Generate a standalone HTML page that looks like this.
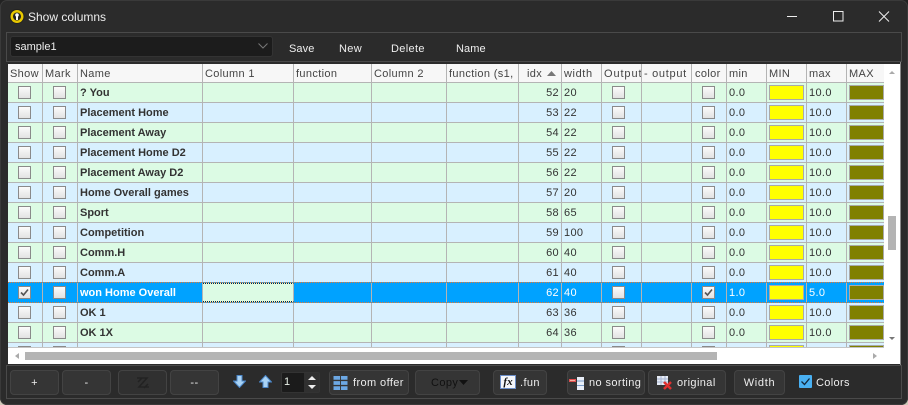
<!DOCTYPE html>
<html><head><meta charset="utf-8"><style>
html,body{margin:0;padding:0;background:linear-gradient(#222 50%,#cfc8b8 50%);}
#w{position:relative;width:908px;height:405px;overflow:hidden;background:#2b2b2b;font:11px "Liberation Sans",sans-serif;color:#eee;border-radius:7px;box-shadow:inset 0 0 0 1px #3a3a3a;}
.a{position:absolute;}
.panel{position:absolute;border:1px solid #4a4a4a;box-sizing:border-box;}
.t{position:absolute;white-space:nowrap;letter-spacing:.35px;}
#grid{position:absolute;left:8px;top:64px;width:892px;height:300px;background:#fff;overflow:hidden;}
#clip{position:absolute;left:0;top:0;width:876px;height:283px;overflow:hidden;}
.r{position:absolute;left:0;width:877px;height:20px;display:grid;grid-template-columns:35px 35px 125px 91px 78px 75px 72px 43px 40px 40px 50px 35px 40px 40px 40px 38px;box-sizing:border-box;border-bottom:1px solid #b4b4b4;color:#333;letter-spacing:.35px;}
.r>span{position:relative;border-right:1px solid #b4b4b4;box-sizing:border-box;line-height:21px;padding-left:2px;white-space:nowrap;overflow:hidden;}
.g{background:#dcfbe4;}
.b{background:#d8f0ff;}
.h{top:0;height:19px;background:#f7f7f7;color:#444;}
.r.h>span{line-height:20px;}
.r>span.n{font-weight:bold;letter-spacing:0;}
.i{text-align:right;padding-right:2px;}
.c:before{content:"";position:absolute;left:10px;top:3px;width:13px;height:13px;box-sizing:border-box;border:1px solid #8a8a8a;background:linear-gradient(#fbfbfb,#e2e2e2);}
.y:before,.o:before{content:"";position:absolute;left:2px;top:2px;width:35px;height:15px;box-sizing:border-box;border:1px solid #aaa;background:#ff0;}
.o:before{background:#808000;}
.r.sel{background:#00a2ff;color:#fff;top:218px;height:21px;border-top:1px dotted #e87830;border-bottom:1px dotted #e87830;}
.btn{position:absolute;top:370px;height:25px;box-sizing:border-box;border:1px solid #434343;border-radius:4px;background:#353535;color:#eee;text-align:center;line-height:25px;letter-spacing:.4px;}
</style></head><body><div id="w">

<svg class="a" style="left:9px;top:9px" width="16" height="15" viewBox="0 0 16 15"><circle cx="8" cy="7.500" r="7.500" fill="#222"/><circle cx="8" cy="7.500" r="6.500" fill="#e8c800"/><circle cx="8" cy="7.500" r="4" fill="#222"/><circle cx="8" cy="6" r="1.800" fill="#fff"/><rect x="7" y="6.500" width="2" height="4.500" fill="#fff"/></svg>
<div class="t" style="left:28px;top:10px;font-size:12px;letter-spacing:0;">Show columns</div>
<svg class="a" style="left:785px;top:9px" width="106" height="16" viewBox="0 0 106 16"><path d="M2 7.500H12" stroke="#eee" fill="none"/><rect x="48.500" y="2.500" width="9.500" height="9.500" stroke="#eee" fill="none"/><path d="M94 2.500L104 12.500M104 2.500L94 12.500" stroke="#eee" fill="none"/></svg>

<div class="panel" style="left:6px;top:32px;width:896px;height:30px;"></div>
<div class="a" style="left:10px;top:36px;width:263px;height:21px;box-sizing:border-box;background:#1c1c1c;border:1px solid #333;border-radius:3px;"></div>
<div class="t" style="left:15px;top:41px;letter-spacing:0;">sample1</div>
<svg class="a" style="left:258px;top:43px" width="10" height="6"><path d="M.5 .5L5 5L9.500 .5" stroke="#777" fill="none"/></svg>
<div class="t" style="left:289px;top:43px;letter-spacing:.1px;">Save</div>
<div class="t" style="left:339px;top:43px;">New</div>
<div class="t" style="left:391px;top:43px;">Delete</div>
<div class="t" style="left:456px;top:43px;letter-spacing:.1px;">Name</div>

<div id="grid">
<div id="clip">
<div class="r h"><span>Show</span><span>Mark</span><span>Name</span><span>Column 1</span><span>function</span><span>Column 2</span><span>function (s1,</span><span style="padding-left:8px">idx<svg class="a" style="left:28px;top:7px" width="9" height="5"><path d="M0 5L4.500 0L9 5Z" fill="#777"/></svg></span><span style="letter-spacing:.6px">width</span><span style="letter-spacing:.9px">Output</span><span style="letter-spacing:.7px">- output</span><span style="padding-left:3px">color</span><span>min</span><span>MIN</span><span>max</span><span>MAX</span></div>

<div class="r g" style="top:19px"><span class="c"></span><span class="c"></span><span class="n">? You</span><span></span><span></span><span></span><span></span><span class="i">52</span><span>20</span><span class="c"></span><span></span><span class="c"></span><span>0.0</span><span class="y"></span><span>10.0</span><span class="o"></span></div>
<div class="r b" style="top:39px"><span class="c"></span><span class="c"></span><span class="n">Placement Home</span><span></span><span></span><span></span><span></span><span class="i">53</span><span>22</span><span class="c"></span><span></span><span class="c"></span><span>0.0</span><span class="y"></span><span>10.0</span><span class="o"></span></div>
<div class="r g" style="top:59px"><span class="c"></span><span class="c"></span><span class="n">Placement Away</span><span></span><span></span><span></span><span></span><span class="i">54</span><span>22</span><span class="c"></span><span></span><span class="c"></span><span>0.0</span><span class="y"></span><span>10.0</span><span class="o"></span></div>
<div class="r b" style="top:79px"><span class="c"></span><span class="c"></span><span class="n">Placement Home D2</span><span></span><span></span><span></span><span></span><span class="i">55</span><span>22</span><span class="c"></span><span></span><span class="c"></span><span>0.0</span><span class="y"></span><span>10.0</span><span class="o"></span></div>
<div class="r g" style="top:99px"><span class="c"></span><span class="c"></span><span class="n">Placement Away D2</span><span></span><span></span><span></span><span></span><span class="i">56</span><span>22</span><span class="c"></span><span></span><span class="c"></span><span>0.0</span><span class="y"></span><span>10.0</span><span class="o"></span></div>
<div class="r b" style="top:119px"><span class="c"></span><span class="c"></span><span class="n">Home Overall games</span><span></span><span></span><span></span><span></span><span class="i">57</span><span>20</span><span class="c"></span><span></span><span class="c"></span><span>0.0</span><span class="y"></span><span>10.0</span><span class="o"></span></div>
<div class="r g" style="top:139px"><span class="c"></span><span class="c"></span><span class="n">Sport</span><span></span><span></span><span></span><span></span><span class="i">58</span><span>65</span><span class="c"></span><span></span><span class="c"></span><span>0.0</span><span class="y"></span><span>10.0</span><span class="o"></span></div>
<div class="r b" style="top:159px"><span class="c"></span><span class="c"></span><span class="n">Competition</span><span></span><span></span><span></span><span></span><span class="i">59</span><span>100</span><span class="c"></span><span></span><span class="c"></span><span>0.0</span><span class="y"></span><span>10.0</span><span class="o"></span></div>
<div class="r g" style="top:179px"><span class="c"></span><span class="c"></span><span class="n">Comm.H</span><span></span><span></span><span></span><span></span><span class="i">60</span><span>40</span><span class="c"></span><span></span><span class="c"></span><span>0.0</span><span class="y"></span><span>10.0</span><span class="o"></span></div>
<div class="r b" style="top:199px"><span class="c"></span><span class="c"></span><span class="n">Comm.A</span><span></span><span></span><span></span><span></span><span class="i">61</span><span>40</span><span class="c"></span><span></span><span class="c"></span><span>0.0</span><span class="y"></span><span>10.0</span><span class="o"></span></div>
<div class="r b" style="top:239px"><span class="c"></span><span class="c"></span><span class="n">OK 1</span><span></span><span></span><span></span><span></span><span class="i">63</span><span>36</span><span class="c"></span><span></span><span class="c"></span><span>0.0</span><span class="y"></span><span>10.0</span><span class="o"></span></div>
<div class="r g" style="top:259px"><span class="c"></span><span class="c"></span><span class="n">OK 1X</span><span></span><span></span><span></span><span></span><span class="i">64</span><span>36</span><span class="c"></span><span></span><span class="c"></span><span>0.0</span><span class="y"></span><span>10.0</span><span class="o"></span></div>
<div class="r b" style="top:279px"><span class="c"></span><span class="c"></span><span></span><span></span><span></span><span></span><span></span><span></span><span></span><span class="c"></span><span></span><span class="c"></span><span></span><span class="y"></span><span></span><span class="o"></span></div>
<div class="r sel"><span class="c"><svg class="a" style="left:12px;top:5px" width="9" height="9"><path d="M1 4.500L3.500 7L8 1.500" stroke="#555" stroke-width="1.600" fill="none"/></svg></span><span class="c"></span><span class="n">won Home Overall</span><span style="background:#dcfbe4;border-top:1px dotted #222;border-bottom:1px dotted #222"></span><span></span><span></span><span></span><span class="i">62</span><span>40</span><span class="c"></span><span></span><span class="c"><svg class="a" style="left:12px;top:5px;z-index:1" width="9" height="9"><path d="M1 4.500L3.500 7L8 1.500" stroke="#555" stroke-width="1.600" fill="none"/></svg></span><span>1.0</span><span class="y"></span><span>5.0</span><span class="o"></span></div>
</div>
<div class="a" style="left:0;top:283px;width:876px;height:1px;background:#c4c4c4"></div>
<div class="a" style="left:17px;top:288px;width:692px;height:8px;background:#b4b4b4"></div>
<svg class="a" style="left:7px;top:288px" width="4" height="8"><path d="M4 1V7L0 4Z" fill="#aaa"/></svg>
<svg class="a" style="left:865px;top:288px" width="4" height="8"><path d="M0 1V7L4 4Z" fill="#aaa"/></svg>
<div class="a" style="left:880px;top:152px;width:8px;height:34px;background:#b4b4b4"></div>
<svg class="a" style="left:881px;top:7px" width="6" height="3"><path d="M0 3L3 0L6 3Z" fill="#aaa"/></svg>
<svg class="a" style="left:881px;top:273px" width="6" height="3"><path d="M0 0L3 3L6 0Z" fill="#777"/></svg>
</div>

<div class="a" style="left:900px;top:62px;width:1px;height:303px;background:#888"></div>
<div class="panel" style="left:6px;top:365px;width:896px;height:34px;"></div>

<div class="btn" style="left:10px;width:49px;">+</div>
<div class="btn" style="left:62px;width:49px;">-</div>
<div class="btn" style="left:118px;width:49px;background:#303030;"><svg class="a" style="left:17px;top:5px" width="14" height="14"><path d="M1 2H11L3 11H13M2 6L6 2M12 8L8 12" stroke="#222" stroke-width="1.500" fill="none"/></svg></div>
<div class="btn" style="left:170px;width:49px;">--</div>

<svg class="a" style="left:233px;top:375px" width="13" height="13" viewBox="0 0 13 13"><path d="M4 .5H9V6H12.500L6.500 12.500L.5 6H4Z" fill="#a9d3f5" stroke="#4a86c8"/></svg>
<svg class="a" style="left:259px;top:375px" width="13" height="13" viewBox="0 0 13 13"><path d="M4 12.500H9V7H12.500L6.500 .5L.5 7H4Z" fill="#a9d3f5" stroke="#4a86c8"/></svg>

<div class="a" style="left:281px;top:372px;width:39px;height:21px;box-sizing:border-box;background:#1b1b1b;border:1px solid #333;border-radius:2px;"></div>
<div class="a" style="left:304px;top:373px;width:15px;height:19px;background:#303030;"></div>
<div class="t" style="left:284px;top:376px;color:#e8f0e8;">1</div>
<svg class="a" style="left:307px;top:374px" width="10" height="17"><path d="M1 6L5 2L9 6ZM1 11L5 15L9 11Z" fill="#eee"/></svg>

<div class="btn" style="left:329px;width:80px;text-align:left;padding-left:23px;">from offer</div>
<svg class="a" style="left:333px;top:376px" width="15" height="14" viewBox="0 0 15 15"><path d="M0 0H7V4H0ZM8 0H15V4H8ZM0 5.500H7V9.500H0ZM8 5.500H15V9.500H8ZM0 11H7V15H0ZM8 11H15V15H8Z" fill="#6ca8e4"/></svg>
<div class="btn" style="left:415px;width:65px;color:#111;text-align:left;padding-left:15px;">Copy</div>
<svg class="a" style="left:459px;top:380px" width="9" height="5"><path d="M0 0H9L4.500 5Z" fill="#111"/></svg>
<div class="btn" style="left:493px;width:54px;text-align:left;padding-left:26px;">.fun</div>
<div class="a" style="left:500px;top:375px;width:16px;height:14px;box-sizing:border-box;border:1px solid #6c8ec8;background:#f4f6fa;color:#111;font:italic bold 11px/12px 'Liberation Serif',serif;text-align:center;">fx</div>
<div class="btn" style="left:567px;width:78px;text-align:left;padding-left:21px;">no sorting</div>
<svg class="a" style="left:569px;top:377px" width="15" height="13" viewBox="0 0 15 13"><rect x="0" y="2" width="7" height="3" fill="#e05050"/><rect x="1" y="3" width="5" height="1" fill="#f4b0a0"/><path d="M8 0H15V13H8Z" fill="#e8eef8"/><path d="M8 4H15M8 8.500H15" stroke="#7a9cc8"/></svg>
<div class="btn" style="left:648px;width:78px;text-align:left;padding-left:28px;">original</div>
<svg class="a" style="left:657px;top:376px" width="16" height="14" viewBox="0 0 16 14"><path d="M0 0H11V9H0Z" fill="#e8edf7"/><path d="M0 3H11M0 6H11M4 0V9M8 0V9" stroke="#a5b4d2" fill="none"/><path d="M7 6L14 13M14 6L7 13" stroke="#e03030" stroke-width="2.500" fill="none"/></svg>
<div class="btn" style="left:734px;width:51px;letter-spacing:.7px;">Width</div>
<div class="a" style="left:799px;top:375px;width:13px;height:13px;background:#49b0f2;border-radius:1px;"><svg class="a" style="left:2px;top:2px" width="9" height="9"><path d="M.5 4.500L3.500 7.500L8.500 1.500" stroke="#12263a" stroke-width="1.300" fill="none"/></svg></div>
<div class="t" style="left:816px;top:377px;">Colors</div>
</div></body></html>
